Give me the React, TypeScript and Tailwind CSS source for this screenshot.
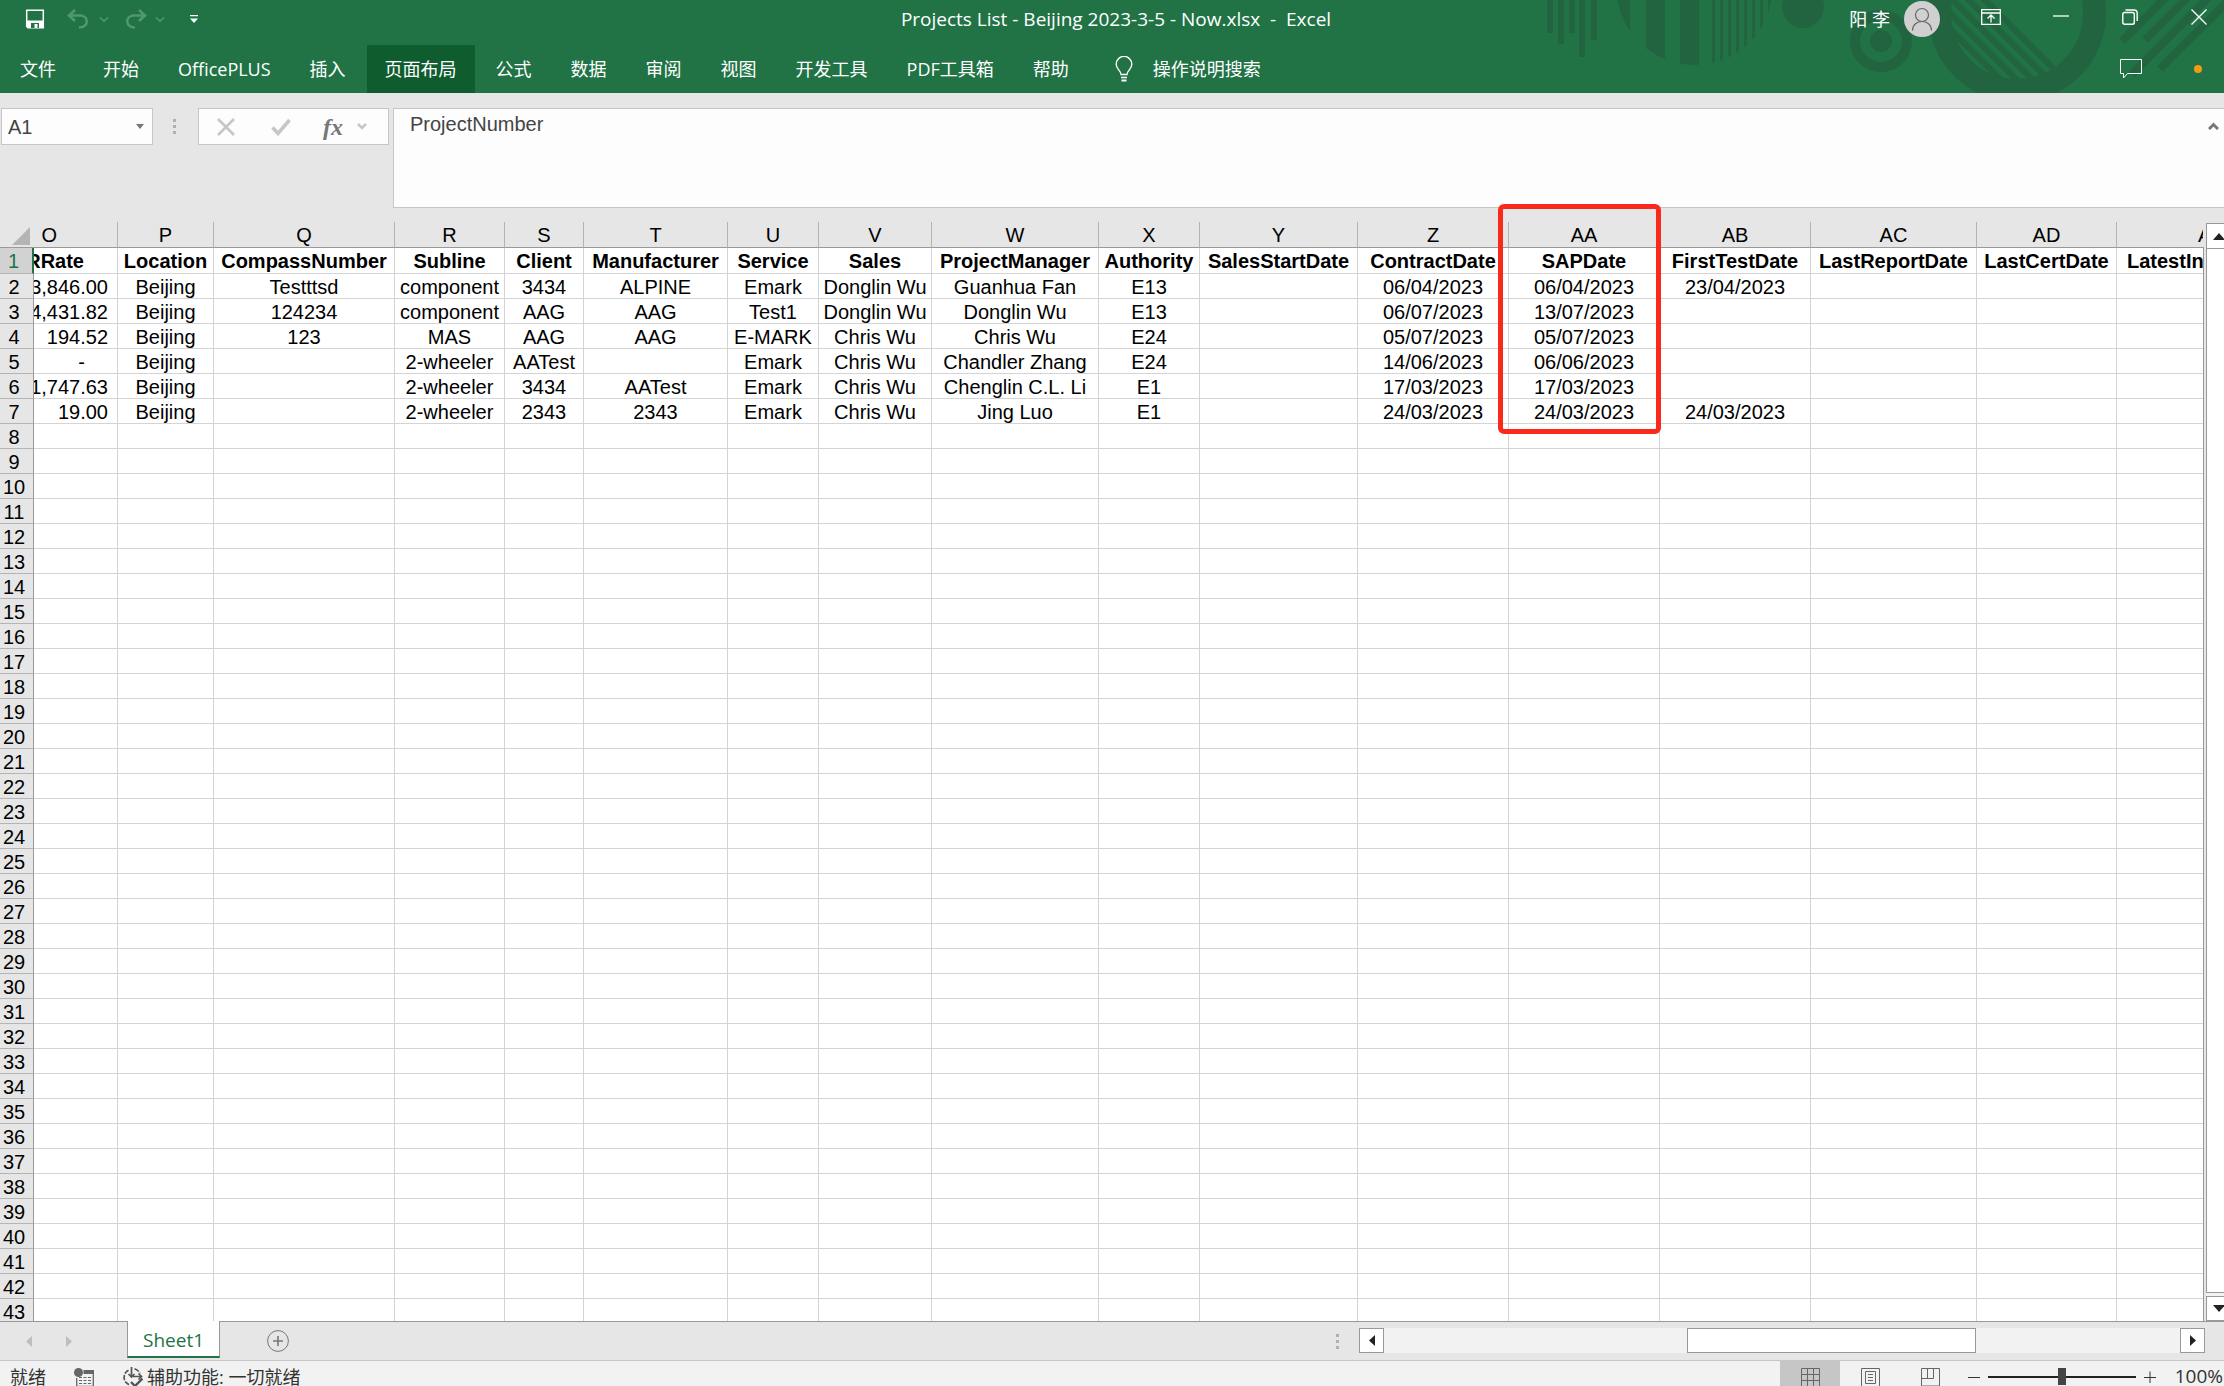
import type { ReactNode } from 'react'

type ColumnDef = {
  letter: string
  title: string
  width: string
}

const columns: ColumnDef[] = [
  { letter: 'O', title: 'RRate', width: 'w-[84px]' },
  { letter: 'P', title: 'Location', width: 'w-[96px]' },
  { letter: 'Q', title: 'CompassNumber', width: 'w-[181px]' },
  { letter: 'R', title: 'Subline', width: 'w-[110px]' },
  { letter: 'S', title: 'Client', width: 'w-[79px]' },
  { letter: 'T', title: 'Manufacturer', width: 'w-[144px]' },
  { letter: 'U', title: 'Service', width: 'w-[91px]' },
  { letter: 'V', title: 'Sales', width: 'w-[113px]' },
  { letter: 'W', title: 'ProjectManager', width: 'w-[167px]' },
  { letter: 'X', title: 'Authority', width: 'w-[101px]' },
  { letter: 'Y', title: 'SalesStartDate', width: 'w-[158px]' },
  { letter: 'Z', title: 'ContractDate', width: 'w-[151px]' },
  { letter: 'AA', title: 'SAPDate', width: 'w-[151px]' },
  { letter: 'AB', title: 'FirstTestDate', width: 'w-[151px]' },
  { letter: 'AC', title: 'LastReportDate', width: 'w-[166px]' },
  { letter: 'AD', title: 'LastCertDate', width: 'w-[140px]' },
  { letter: 'A', title: 'LatestIn', width: 'w-auto' },
]

const records: string[][] = [
  ['3,846.00', 'Beijing', 'Testttsd', 'component', '3434', 'ALPINE', 'Emark', 'Donglin Wu', 'Guanhua Fan', 'E13', '', '06/04/2023', '06/04/2023', '23/04/2023'],
  ['4,431.82', 'Beijing', '124234', 'component', 'AAG', 'AAG', 'Test1', 'Donglin Wu', 'Donglin Wu', 'E13', '', '06/07/2023', '13/07/2023', ''],
  ['194.52', 'Beijing', '123', 'MAS', 'AAG', 'AAG', 'E-MARK', 'Chris Wu', 'Chris Wu', 'E24', '', '05/07/2023', '05/07/2023', ''],
  ['-', 'Beijing', '', '2-wheeler', 'AATest', '', 'Emark', 'Chris Wu', 'Chandler Zhang', 'E24', '', '14/06/2023', '06/06/2023', ''],
  ['1,747.63', 'Beijing', '', '2-wheeler', '3434', 'AATest', 'Emark', 'Chris Wu', 'Chenglin C.L. Li', 'E1', '', '17/03/2023', '17/03/2023', ''],
  ['19.00', 'Beijing', '', '2-wheeler', '2343', '2343', 'Emark', 'Chris Wu', 'Jing Luo', 'E1', '', '24/03/2023', '24/03/2023', '24/03/2023'],
]

const rowNumbers = Array.from({ length: 42 }, (_, i) => i + 2)

const tabs = ['开始', 'OfficePLUS', '插入', '页面布局', '公式', '数据', '审阅', '视图', '开发工具', 'PDF工具箱', '帮助']

function IconButton({ label, className = '', children }: { label: string; className?: string; children: ReactNode }) {
  return (
    <button type="button" aria-label={label} className={`flex shrink-0 items-center justify-center ${className}`}>
      {children}
    </button>
  )
}

function Chevron({ className }: { className: string }) {
  return (
    <svg viewBox="0 0 10 7" className={className} fill="none" stroke="currentColor" strokeWidth="1.6">
      <path d="M1 1.5 5 5.2 9 1.5" />
    </svg>
  )
}

function HeaderArt() {
  return (
    <svg viewBox="0 0 724 93" className="pointer-events-none absolute top-0 right-0 h-[93px] w-[724px] text-[#22643f]" fill="currentColor">
      <defs>
        <clipPath id="disc">
          <circle cx="194.5" cy="-13" r="78" />
        </clipPath>
        <clipPath id="hole">
          <path d="M446 0H600V93H446Z" />
        </clipPath>
        <clipPath id="inner">
          <circle cx="517" cy="13" r="67" />
        </clipPath>
      </defs>
      <path d="M47 0h6v33h-6zM58 0h6v44h-6zM69 0h6v33h-6zM79 0h6v57h-6zM91 0h6v40h-6z" />
      <g clipPath="url(#disc)">
        <path d="M110 0h20v80h-20zM146 0h19v80h-19zM180 0h19v80h-19zM212 0h3v80h-3zM220 0h3v80h-3zM228 0h3v80h-3zM236 0h3v80h-3zM244 0h3v80h-3zM252 0h3v80h-3zM260 0h3v80h-3zM268 0h3v80h-3z" />
      </g>
      <circle cx="303" cy="7" r="21" />
      <circle cx="381" cy="41" r="11" />
      <circle cx="381" cy="41" r="26" fill="none" stroke="currentColor" strokeWidth="10" />
      <circle cx="517" cy="13" r="77.5" fill="none" stroke="currentColor" strokeWidth="23" />
      <g clipPath="url(#hole)">
        <g clipPath="url(#inner)" stroke="currentColor" strokeWidth="6">
          <path d="M480-5 570 85M464-5 554 85M448-5 538 85M432-5 522 85M416-5 506 85" />
        </g>
      </g>
      <g stroke="currentColor" strokeWidth="8">
        <path d="M622 41 669-6M645 40 691-6M632 74 712-6M660 69 735-6" />
      </g>
    </svg>
  )
}

function TitleBar() {
  return (
    <div className="relative flex h-[45px] items-start">
      <div className="flex h-[38px] flex-1 items-center pl-[25px]">
        <IconButton label="保存">
          <svg viewBox="0 0 20 20" className="size-5" fill="none" stroke="#fff">
            <path d="M1.7 1.2h16.6v17.6H3L1.7 17.5Z" strokeWidth="1.5" />
            <path d="M2 11.5h16v7H3l-1-1Z" fill="#fff" stroke="none" />
            <path d="M6 14h8v5H6Z" fill="#217346" stroke="none" />
            <path d="M9.5 15h3v4h-3Z" fill="#fff" stroke="none" />
          </svg>
        </IconButton>
        <IconButton label="撤消" className="ml-[22px] text-[#4f9870]">
          <svg viewBox="0 0 22 20" className="h-5 w-[22px]" fill="none" stroke="currentColor" strokeWidth="2.6">
            <path d="M8 1 2 6.5 8 12M2.5 6.5H14c8 1 8 12-2 12" />
          </svg>
        </IconButton>
        <Chevron className="ml-[10px] h-[7px] w-[10px] text-[#4f9870]" />
        <IconButton label="恢复" className="ml-4 text-[#4f9870]">
          <svg viewBox="0 0 22 20" className="h-5 w-[22px]" fill="none" stroke="currentColor" strokeWidth="2.6">
            <path d="m14 1 6 5.500-6 5.500M19.500 6.500H8c-8 1-8 12 2 12" />
          </svg>
        </IconButton>
        <Chevron className="ml-2 h-[7px] w-[10px] text-[#4f9870]" />
        <IconButton label="自定义快速访问工具栏" className="ml-6">
          <svg viewBox="0 0 10 8" className="h-2 w-[10px]" fill="#fff">
            <path d="M1 0h8v1.300H1zM1 3.500h8L5 8z" />
          </svg>
        </IconButton>
      </div>
      <h1 className="flex h-[38px] items-center text-[19px] whitespace-pre">Projects List - Beijing 2023-3-5 - Now.xlsx  -  Excel</h1>
      <div className="flex h-[34px] flex-1 items-center justify-end pr-[17px]">
        <div className="flex items-center gap-[14px] pt-1">
          <span className="text-lg">阳 李</span>
          <svg viewBox="0 0 36 36" className="size-9" fill="none">
            <circle cx="18" cy="18" r="18" fill="#d0d0d0" />
            <g stroke="#666" strokeWidth="1.2">
              <circle cx="18" cy="14" r="6.500" />
              <path d="M8.500 29.500c0-12 19-12 19 0" />
            </g>
          </svg>
        </div>
        <IconButton label="功能区显示选项" className="ml-[41px]">
          <svg viewBox="0 0 20 16" className="h-4 w-5" fill="none" stroke="#fff" strokeWidth="1.300">
            <path d="M.7.7h18.600v14.600H.7ZM.7 4h18.600M10 13.500V6.500M6.500 9.500 10 6l3.500 3.500" />
          </svg>
        </IconButton>
        <IconButton label="最小化" className="ml-[52px]">
          <svg viewBox="0 0 16 16" className="size-4" stroke="#fff" strokeWidth="1.300">
            <path d="M0 7h16" />
          </svg>
        </IconButton>
        <IconButton label="还原" className="ml-[53px]">
          <svg viewBox="0 0 16 16" className="size-4" fill="none" stroke="#fff" strokeWidth="1.400">
            <rect x=".8" y="3.500" width="11.500" height="11.700" rx="1.800" />
            <path d="M3.500 1h8.500a3.200 3.200 0 0 1 3.200 3.200V12" />
          </svg>
        </IconButton>
        <IconButton label="关闭" className="ml-[53px]">
          <svg viewBox="0 0 16 16" className="size-4" stroke="#fff" strokeWidth="1.400">
            <path d="m.5.5 15 15M15.500.5l-15 15" />
          </svg>
        </IconButton>
      </div>
    </div>
  )
}

function Ribbon() {
  return (
    <nav className="relative flex h-12 items-stretch text-lg">
      <button type="button" className="pr-[29px] pl-5">文件</button>
      <div className="flex gap-[3px]">
        {tabs.map((tab) => (
          <button
            key={tab}
            type="button"
            className={tab === '页面布局' ? 'bg-[#0f5c2f] px-[18px]' : 'px-[18px]'}
          >
            {tab}
          </button>
        ))}
      </div>
      <button type="button" className="ml-7 flex items-center gap-5">
        <svg viewBox="0 0 18 26" className="h-[26px] w-[18px]" fill="none" stroke="#fff" strokeWidth="1.400">
          <path d="M6 18.500c0-4-4.800-5-4.800-10.300a7.800 7.800 0 0 1 15.600 0c0 5.300-4.800 6.300-4.800 10.300ZM6 21.500h6" />
          <path d="M6.500 24.500h5" strokeWidth="2" />
        </svg>
        操作说明搜索
      </button>
      <div className="ml-auto flex items-center gap-[52px] pr-[22px]">
        <IconButton label="批注">
          <svg viewBox="0 0 22 20" className="h-5 w-[22px]" fill="none" stroke="#fff">
            <path d="M.5.5h21v14H7.500L3.500 19v-4.500h-3Z" />
          </svg>
        </IconButton>
        <span className="size-2 rounded-full bg-[#f29a12]" />
      </div>
    </nav>
  )
}

function Dots() {
  return (
    <div className="flex flex-col gap-[3px]">
      <span className="size-[3px] bg-[#b0b0b0]" />
      <span className="size-[3px] bg-[#b0b0b0]" />
      <span className="size-[3px] bg-[#b0b0b0]" />
    </div>
  )
}

function FormulaBar() {
  return (
    <div className="flex h-[115px] items-start pt-[15px] pl-px text-[#444]">
      <div className="flex h-[37px] w-[152px] items-center border border-[#c6c6c6] bg-[#fdfdfd] pr-2 pl-[6px]">
        <input aria-label="名称框" defaultValue="A1" className="min-w-0 flex-1 font-['Liberation_Sans',sans-serif] text-xl outline-none" />
        <IconButton label="名称列表">
          <svg viewBox="0 0 8 5" className="h-[5px] w-2" fill="#777">
            <path d="M0 0h8L4 5z" />
          </svg>
        </IconButton>
      </div>
      <div className="flex h-[37px] w-[45px] items-center pl-5">
        <Dots />
      </div>
      <div className="flex h-[37px] w-[191px] items-center border border-[#c6c6c6] bg-[#fdfdfd] pl-[18px] text-[#c6c6c6]">
        <IconButton label="取消">
          <svg viewBox="0 0 18 18" className="size-[18px]" stroke="currentColor" strokeWidth="2.600">
            <path d="m1 1 16 16M17 1 1 17" />
          </svg>
        </IconButton>
        <IconButton label="输入" className="ml-9">
          <svg viewBox="0 0 20 18" className="h-[18px] w-5" fill="none" stroke="currentColor" strokeWidth="3.500">
            <path d="m1.500 9.500 5.500 6L18.500 2" />
          </svg>
        </IconButton>
        <button type="button" aria-label="插入函数" className="ml-8 font-['Liberation_Serif',serif] text-2xl font-bold text-[#777] italic">
          fx
        </button>
        <svg viewBox="0 0 10 7" className="ml-[14px] h-[7px] w-[10px]" fill="none" stroke="currentColor" strokeWidth="2.500">
          <path d="m1 1 4 4 4-4" />
        </svg>
      </div>
      <div className="ml-1 flex h-[100px] flex-1 items-start border border-r-0 border-[#c6c6c6] bg-[#fdfdfd]">
        <textarea
          aria-label="编辑栏"
          defaultValue="ProjectNumber"
          className="h-full flex-1 resize-none pt-px pl-4 font-['Liberation_Sans',sans-serif] text-xl outline-none"
        />
        <IconButton label="折叠编辑栏" className="mt-[13px] mr-[5px]">
          <svg viewBox="0 0 11 8" className="h-2 w-[11px]" fill="none" stroke="#777" strokeWidth="3">
            <path d="m1 7 4.500-4.500L10 7" />
          </svg>
        </IconButton>
      </div>
    </div>
  )
}

function cellPadding(col: number, value: string) {
  if (col !== 0) return 'justify-center'
  return value === '-' ? 'justify-end pr-8' : 'justify-end pr-[9px]'
}

function letterPadding(letter: string) {
  if (letter === 'O') return 'justify-end pr-[60px]'
  if (letter === 'A') return 'pl-[81px]'
  return 'justify-center'
}

function titlePadding(title: string) {
  if (title === 'RRate') return 'justify-end pr-[33px]'
  if (title === 'LatestIn') return 'pl-[10px]'
  return 'justify-center'
}

function Sheet() {
  return (
    <div className="min-w-0 flex-1 overflow-hidden">
      <table className="w-full table-fixed border-separate border-spacing-0 font-['Liberation_Sans',sans-serif] text-xl leading-6 whitespace-nowrap text-black">
        <colgroup>
          <col className="w-[34px]" />
          {columns.map((c) => (
            <col key={c.letter} className={c.width} />
          ))}
        </colgroup>
        <thead>
          <tr>
            <th aria-label="全选" className="h-[26px] border-b border-[#999] p-0">
              <svg viewBox="0 0 18 18" className="mt-[3px] ml-3 size-[18px]" fill="#b4b4b4">
                <path d="M18 0v18H0z" />
              </svg>
            </th>
            {columns.map((c) => (
              <th key={c.letter} scope="col" className="h-[26px] border-r border-b border-r-[#b4b4b4] border-b-[#999] p-0 font-normal last:border-r-0">
                <div className={`flex overflow-hidden ${letterPadding(c.letter)}`}>{c.letter}</div>
              </th>
            ))}
          </tr>
        </thead>
        <tbody>
          <tr>
            <th scope="row" className="h-[26px] border-r-2 border-b border-r-[#217346] border-b-[#b4b4b4] bg-[#d2d2d2] p-0 pr-[5px] font-normal text-[#217346]">
              1
            </th>
            {columns.map((c) => (
              <td key={c.letter} className="h-[26px] border-r border-b border-[#d4d4d4] bg-white p-0 font-bold last:border-r-0">
                <div className={`flex overflow-hidden ${titlePadding(c.title)}`}>{c.title}</div>
              </td>
            ))}
          </tr>
          {rowNumbers.map((n) => (
            <tr key={n} className="leading-[22px]">
              <th scope="row" className="h-[25px] border-r border-b border-r-[#999] border-b-[#b4b4b4] p-0 pt-0.5 pr-[5px] font-normal">
                {n}
              </th>
              {columns.map((c, i) => {
                const value = records[n - 2]?.[i] ?? ''
                return (
                  <td key={c.letter} className="h-[25px] border-r border-b border-[#d4d4d4] bg-white p-0 last:border-r-0">
                    {value && <div className={`flex overflow-hidden pt-0.5 ${cellPadding(i, value)}`}>{value}</div>}
                  </td>
                )
              })}
            </tr>
          ))}
        </tbody>
      </table>
    </div>
  )
}

function VerticalScroll() {
  return (
    <div className="flex w-5 shrink-0 flex-col items-start overflow-hidden pt-px pl-[2px]">
      <IconButton label="向上滚动" className="h-[26px] w-[25px] border border-[#999] bg-white">
        <svg viewBox="0 0 12 7" className="h-[7px] w-3" fill="#222">
          <path d="M6 0l6 7H0z" />
        </svg>
      </IconButton>
      <div className="flex w-[25px] flex-1 flex-col bg-[#f2f2f2] pb-[3px]">
        <div className="flex-1 border border-t-0 border-[#999] bg-white" />
      </div>
      <IconButton label="向下滚动" className="h-[25px] w-[25px] border border-[#999] bg-white">
        <svg viewBox="0 0 12 7" className="h-[7px] w-3" fill="#222">
          <path d="M0 0h12L6 7z" />
        </svg>
      </IconButton>
    </div>
  )
}

function SheetTabs() {
  return (
    <div className="flex h-[40px] border-b border-[#c6c6c6]">
      <div className="flex flex-1 items-start border-t border-[#999]">
        <div className="flex h-[38px] w-[127px] items-center gap-[34px] pl-[26px]">
          <IconButton label="上一张工作表">
            <svg viewBox="0 0 6 11" className="h-[11px] w-[6px]" fill="#bdbdbd">
              <path d="M6 0v11L0 5.500z" />
            </svg>
          </IconButton>
          <IconButton label="下一张工作表">
            <svg viewBox="0 0 6 11" className="h-[11px] w-[6px]" fill="#bdbdbd">
              <path d="M0 0v11l6-5.500z" />
            </svg>
          </IconButton>
        </div>
        <button
          type="button"
          className="-mt-px h-[37px] w-[93px] border-x border-b-2 border-x-[#999] border-b-[#217346] bg-white pt-[3px] text-[19px] text-[#217346]"
        >
          Sheet1
        </button>
        <IconButton label="新工作表" className="ml-[47px] h-[38px]">
          <svg viewBox="0 0 22 22" className="size-[22px]" fill="none" stroke="#777">
            <circle cx="11" cy="11" r="10.400" />
            <path d="M6 11h10M11 6v10" strokeWidth="1.600" />
          </svg>
        </IconButton>
        <div className="ml-auto flex h-[38px] items-center pr-5">
          <Dots />
        </div>
      </div>
      <div className="flex w-7/18 shrink-0 border-t border-[#999] pt-[6px] pr-[19px]">
        <IconButton label="向左滚动" className="size-[25px] border border-[#999] bg-white">
          <svg viewBox="0 0 6 11" className="h-[11px] w-[6px]" fill="#222">
            <path d="M6 0v11L0 5.500z" />
          </svg>
        </IconButton>
        <div className="flex h-[25px] flex-1 bg-[#f2f2f2]">
          <div className="ml-[38%] w-[289px] border border-[#999] bg-white" />
        </div>
        <IconButton label="向右滚动" className="size-[25px] border border-[#999] bg-white">
          <svg viewBox="0 0 6 11" className="h-[11px] w-[6px]" fill="#222">
            <path d="M0 0v11l6-5.500z" />
          </svg>
        </IconButton>
      </div>
    </div>
  )
}

function StatusBar() {
  return (
    <footer className="h-[25px] overflow-hidden bg-[#f2f2f2] text-lg text-[#333]">
      <div className="flex h-8 items-center pl-[10px]">
        <span>就绪</span>
        <svg viewBox="0 0 20 19" className="ml-7 h-[19px] w-5" fill="#666">
          <circle cx="4.500" cy="4.500" r="4.500" />
          <path d="M9.500 2H20v4H9.500z" />
          <path d="M2.700 10v8.300h16.600V4" fill="none" stroke="#666" strokeWidth="1.300" />
          <path d="M5 9.500h3M9.500 9.500h3M14 9.500h3M5 12.500h3M9.500 12.500h3M14 12.500h3M5 15.500h3M9.500 15.500h3M14 15.500h3" stroke="#666" />
        </svg>
        <button type="button" className="ml-7 flex items-center gap-1">
          <svg viewBox="0 0 21 20" className="h-5 w-[21px]" fill="none" stroke="#555" strokeWidth="1.700">
            <path d="M6.500 3.200A8 8 0 0 0 4 15.500l4 3M12.500 1.800c2.500.8 4.500 2.500 5.300 4.500" strokeDasharray="5 1.500" />
            <path d="M9.500 0v9.500M6.500 7l3 3 3-3M11 9.500h8M16.500 6.500l3 3-3 3" />
            <path d="m9 15 4 4 7.500-7.500" strokeWidth="2.400" />
          </svg>
          辅助功能: 一切就绪
        </button>
        <div className="ml-auto flex h-full items-center">
          <IconButton label="普通" className="h-full w-[60px] bg-[#c6c6c6]">
            <svg viewBox="0 0 19 19" className="size-[19px]" fill="none" stroke="#666">
              <path d="M.5.5h18v18H.5ZM6.500.5v18M12.500.5v18M.5 6.500h18M.5 12.500h18" />
            </svg>
          </IconButton>
          <IconButton label="页面布局" className="h-full w-[60px]">
            <svg viewBox="0 0 19 19" className="size-[19px]" fill="none" stroke="#666">
              <path d="M.5.5h18v18H.5ZM4.500 3.500h10v12h-10ZM7 6.500h5M7 9.500h5M7 12.500h5" />
            </svg>
          </IconButton>
          <IconButton label="分页预览" className="h-full w-[60px]">
            <svg viewBox="0 0 19 19" className="size-[19px]" fill="none" stroke="#666">
              <path d="M.5.5h18v17.500H.5ZM.5 10.500h12V.5M6.500.5v10" />
            </svg>
          </IconButton>
          <IconButton label="缩小" className="ml-2">
            <svg viewBox="0 0 12 12" className="size-3" stroke="#333">
              <path d="M0 6.500h12" />
            </svg>
          </IconButton>
          <input
            type="range"
            aria-label="缩放"
            min={0}
            max={200}
            defaultValue={100}
            className="mx-2 h-[17px] w-[148px] appearance-none bg-transparent [&::-webkit-slider-runnable-track]:h-[2px] [&::-webkit-slider-runnable-track]:bg-[#222] [&::-webkit-slider-thumb]:-mt-2 [&::-webkit-slider-thumb]:h-[17px] [&::-webkit-slider-thumb]:w-2 [&::-webkit-slider-thumb]:appearance-none [&::-webkit-slider-thumb]:bg-[#444]"
          />
          <IconButton label="放大">
            <svg viewBox="0 0 12 12" className="size-3" stroke="#333">
              <path d="M0 6.500h12M6 .5v12" />
            </svg>
          </IconButton>
          <span className="w-[68px] pr-px text-right text-[19px]">100%</span>
        </div>
      </div>
    </footer>
  )
}

export default function App() {
  return (
    <div className="relative flex h-screen flex-col overflow-hidden bg-[#e6e6e6] font-['Open_Sans','Noto_Sans_CJK_SC',sans-serif]">
      <header className="relative shrink-0 overflow-hidden bg-[#217346] text-white">
        <HeaderArt />
        <TitleBar />
        <Ribbon />
      </header>
      <FormulaBar />
      <main className="flex min-h-0 flex-1 pt-[14px]">
        <Sheet />
        <div className="mt-[25px] w-px bg-[#999]" />
        <VerticalScroll />
      </main>
      <SheetTabs />
      <StatusBar />
      {/* highlight frame around the SAPDate column */}
      <div className="pointer-events-none absolute top-[204px] left-[1498px] h-[230px] w-[163px] rounded-md border-5 border-[#f92a1c]" />
    </div>
  )
}
